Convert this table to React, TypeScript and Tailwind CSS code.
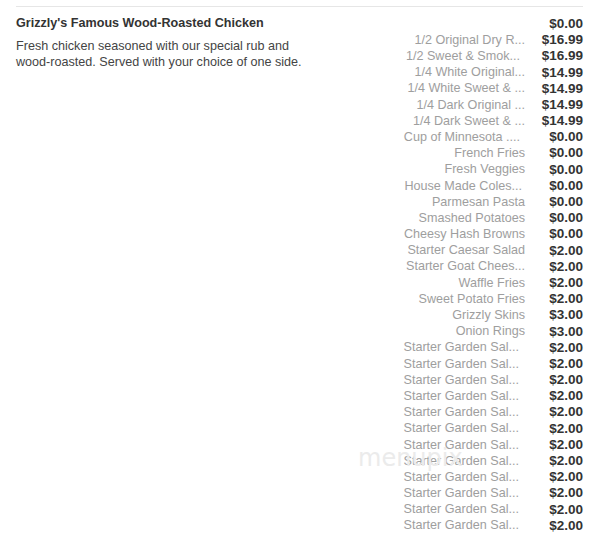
// [name, price, trailing gap after the name]
const items: [string, string, number][] = [
  ['', '$0.00', 0],
  ['1/2 Original Dry R...', '$16.99', 0],
  ['1/2 Sweet & Smok...', '$16.99', 5],
  ['1/4 White Original...', '$14.99', 0],
  ['1/4 White Sweet & ...', '$14.99', 0],
  ['1/4 Dark Original ...', '$14.99', 0],
  ['1/4 Dark Sweet & ...', '$14.99', 0],
  ['Cup of Minnesota ....', '$0.00', 5],
  ['French Fries', '$0.00', 0],
  ['Fresh Veggies', '$0.00', 0],
  ['House Made Coles...', '$0.00', 3],
  ['Parmesan Pasta', '$0.00', 0],
  ['Smashed Potatoes', '$0.00', 0],
  ['Cheesy Hash Browns', '$0.00', 0],
  ['Starter Caesar Salad', '$2.00', 0],
  ['Starter Goat Chees...', '$2.00', 0],
  ['Waffle Fries', '$2.00', 0],
  ['Sweet Potato Fries', '$2.00', 0],
  ['Grizzly Skins', '$3.00', 0],
  ['Onion Rings', '$3.00', 0],
  ...Array.from({ length: 12 }, (): [string, string, number] => ['Starter Garden Sal...', '$2.00', 6]),
];

export default function App() {
  return (
    <main className="relative h-[538px] w-[593px] overflow-hidden bg-white pl-4 pr-[10px] pt-[6px] font-['Liberation_Sans',Arial,sans-serif]">
      <div className="flex border-t border-[#e6e6e6] pt-[8px]">
        <div className="w-[300px]">
          <h3 className="text-[12.6px] font-bold leading-[16px] text-[#333]">Grizzly&apos;s Famous Wood-Roasted Chicken</h3>
          <p className="mt-[7px] text-[12.6px] leading-[16px] text-[#444]">
            Fresh chicken seasoned with our special rub and wood-roasted. Served with your choice of one side.
          </p>
        </div>
        <div className="ml-auto pt-[1px]">
          {items.map(([name, price, gap], i) => (
            <div key={i} className="flex h-[16.2px] items-center">
              <span className="w-[130px] whitespace-nowrap text-right text-[12.6px] text-[#9e9e9e]">
                {name}
                {gap > 0 && <span className="inline-block" style={{ width: gap }} />}
              </span>
              <span className="w-[58px] text-right text-[13.5px] font-bold text-[#333]">{price}</span>
            </div>
          ))}
        </div>
      </div>
      <span className="pointer-events-none absolute left-[358px] top-[440px] text-[24px] text-[#ebebeb] font-['DejaVu_Sans',sans-serif]">
        menupix
      </span>
    </main>
  );
}
